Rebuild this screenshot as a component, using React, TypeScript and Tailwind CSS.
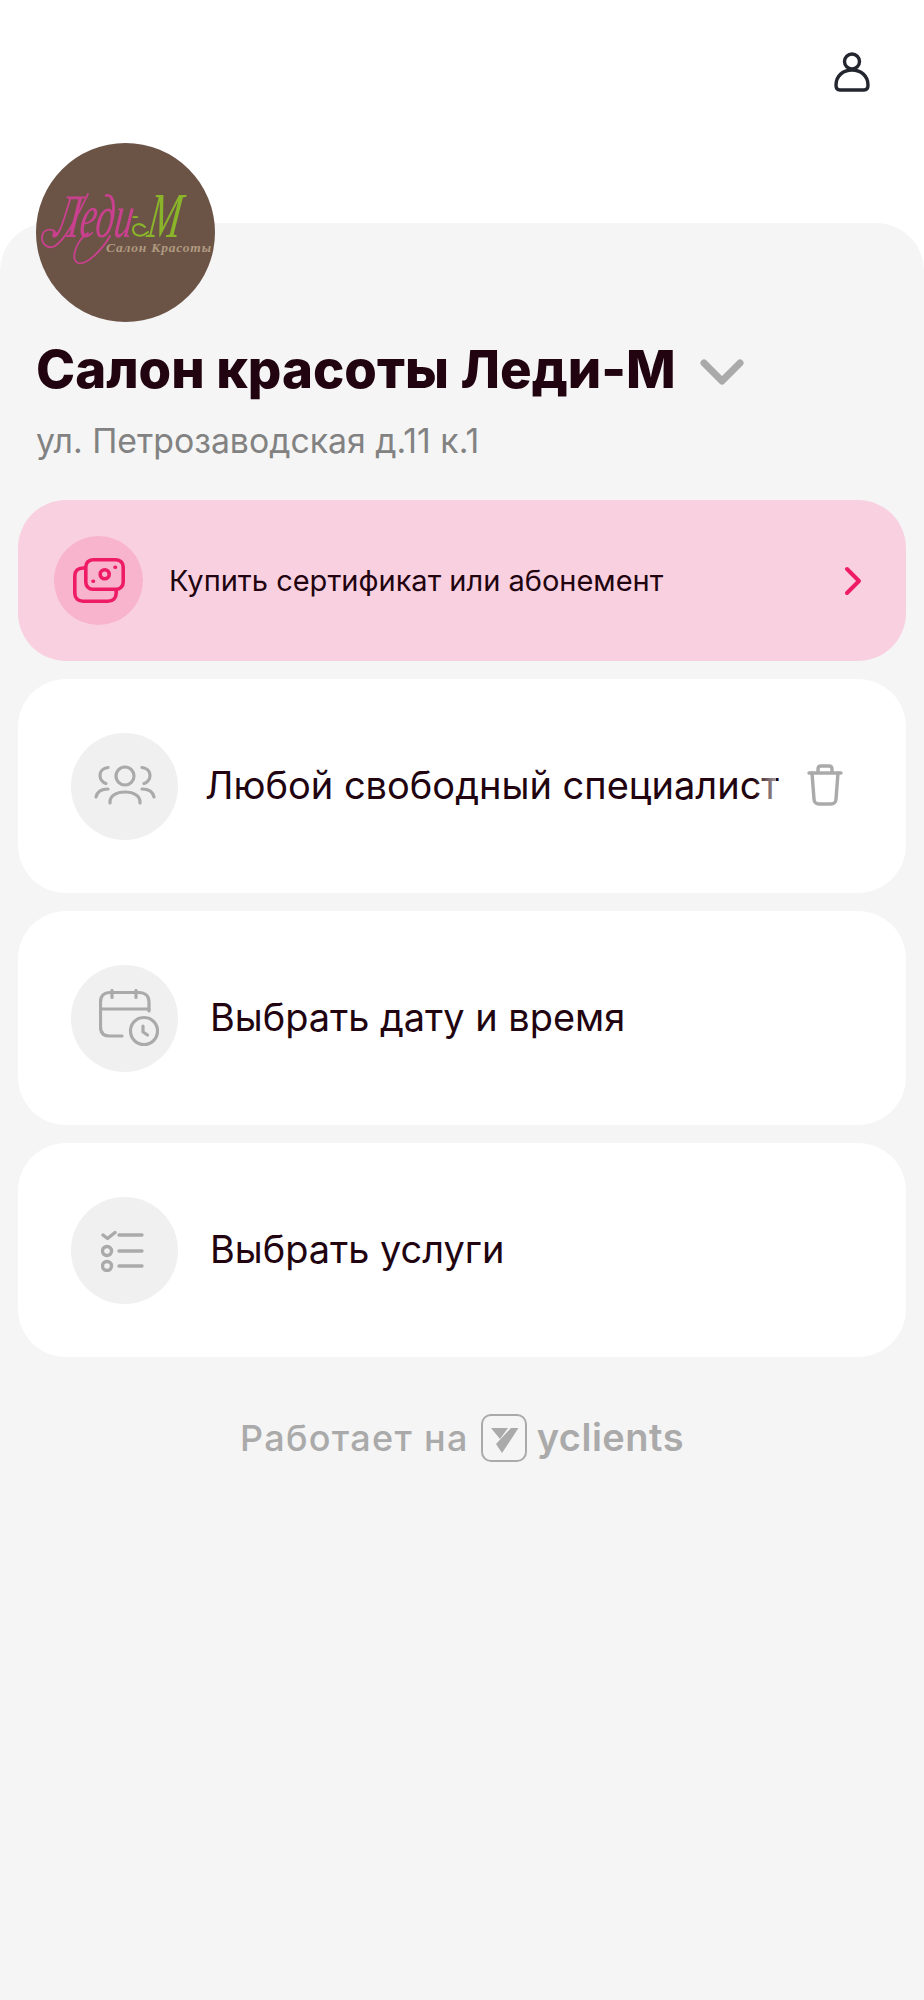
import React from "react";

const Avatar = () => (
  <div className="relative z-10 w-[179px] h-[179px] rounded-full bg-[#6b5446] overflow-hidden">
    <svg viewBox="0 0 179 179" className="w-full h-full" fill="none">
      {/* swashes of the script logo */}
      <path d="M21 91c-6-8-15-4-15 4 0 8 8 11 13 8 12-8 22-30 33-52" stroke="#c9408f" strokeWidth="1.800" strokeLinecap="round" />
      <path d="M74 93c-8 14-24 30-32 27-8-4-2-22 10-30" stroke="#c9408f" strokeWidth="1.800" strokeLinecap="round" />
      <path d="M109 84c-5-5-12-3-12 3 1 6 8 8 15 2" stroke="#8ab52a" strokeWidth="2" strokeLinecap="round" />
      <text transform="translate(17 94) skewX(-8) scale(.6 1)" fontFamily="'Liberation Serif', serif" fontStyle="italic" fontSize="62" fill="#c9408f">Леди</text>
      <text x="96" y="79" fontFamily="'Liberation Serif', serif" fontStyle="italic" fontWeight="700" fontSize="20" fill="#8ab52a">-</text>
      <text transform="translate(110 94) skewX(-8) scale(.62 1)" fontFamily="'Liberation Serif', serif" fontStyle="italic" fontSize="64" fill="#8ab52a">М</text>
      <text x="70" y="109" fontFamily="'Liberation Serif', serif" fontStyle="italic" fontWeight="700" fontSize="13.5" fill="#b09a80" textLength="105">Салон Красоты</text>
    </svg>
  </div>
);

const PeopleIcon = () => (
  <svg viewBox="0 0 62 42" className="w-[62px] h-[42px]" fill="none" stroke="#aaa" strokeWidth="3.200" strokeLinecap="round">
    <circle cx="31" cy="11" r="9" />
    <path d="M16 38v-1c0-6 6-10 15-10s15 4 15 10v1" />
    <path d="M14 2.500c-5 .5-8 4-8 8s3 7 6 8" />
    <path d="M48 2.500c5 .5 8 4 8 8s-3 7-6 8" />
    <path d="M2 32c1-5 5-8 12-8" />
    <path d="M60 32c-1-5-5-8-12-8" />
  </svg>
);

const CalendarIcon = () => (
  <svg viewBox="0 0 60 58" className="w-[60px] h-[58px] ml-[9px]" fill="none" stroke="#aaa" strokeWidth="3.200" strokeLinecap="round" strokeLinejoin="round">
    <path d="M23 47H11c-6 0-9.500-3-9.500-9V13c0-6 3.500-9.500 9.500-9.500h29c6 0 10 3.500 10 9.500v9" />
    <path d="M2 20h48" />
    <path d="M13 1.500v7M37 1.500v7" />
    <circle cx="45" cy="42" r="13.500" />
    <path d="M44 37v6l4.500 3" />
  </svg>
);

const ListIcon = () => (
  <svg viewBox="0 0 43 43" className="w-[43px] h-[43px] mr-[5px]" fill="none" stroke="#aaa" strokeWidth="3.400" strokeLinecap="round" strokeLinejoin="round">
    <path d="M2 6l4.500 3.500L14 3.500" />
    <circle cx="6" cy="22" r="4.500" />
    <circle cx="6" cy="37" r="4.500" />
    <path d="M18 6h23M18 22h23M18 37h23" />
  </svg>
);

const Row = ({ icon, children }: { icon: React.ReactNode; children: React.ReactNode }) => (
  <div className="h-[214px] rounded-[48px] bg-white flex items-center pl-[53px] pr-[56px]">
    <div className="w-[107px] h-[107px] rounded-full bg-[#f0f0f0] flex items-center justify-center shrink-0">
      {icon}
    </div>
    {children}
  </div>
);

export default function App() {
  return (
    <div className="w-[924px] min-h-[2000px] bg-white font-['Inter',sans-serif] text-[#21040f]">
      <div className="h-[223px] flex justify-end pt-[52px] pr-[54px]">
        <svg viewBox="0 0 36 40" className="w-[36px] h-[40px]" fill="none" stroke="#23262f" strokeWidth="3.400">
          <circle cx="18" cy="9.500" r="7.500" />
          <path d="M2 33c0-9 7-15 16-15s16 6 16 15c0 3-1.500 5-4 5H6c-2.500 0-4-2-4-5z" />
        </svg>
      </div>

      <div className="bg-[#f5f5f5] rounded-t-[48px] h-[1777px] px-[18px] flow-root">
        <div className="px-[18px] -mt-[80px]">
          <Avatar />
          <div className="flex items-center mt-[10px] h-[75px]">
            <h1 className="text-[52.7px] leading-[75px] font-extrabold whitespace-nowrap">Салон красоты Леди-М</h1>
            <svg viewBox="0 0 44 26" className="w-[44px] h-[26px] ml-[24px] mt-[4px]" fill="none" stroke="#aaa" strokeWidth="7" strokeLinecap="round" strokeLinejoin="round">
              <path d="M4 4l18 18L40 4" />
            </svg>
          </div>
          <p className="text-[33.8px] leading-[44px] text-[#828282] mt-[12px]">ул. Петрозаводская д.11 к.1</p>
        </div>

        <div className="mt-[37px] flex flex-col gap-[18px]">
          <div className="h-[161px] rounded-[48px] bg-[#f9d0df] flex items-center pl-[36px] pr-[44px]">
            <div className="w-[89px] h-[89px] rounded-full bg-[#f8b4cc] flex items-center justify-center shrink-0">
              <svg viewBox="0 0 52 45" className="w-[52px] h-[45px]" fill="none" stroke="#ee1c64" strokeWidth="3.600" strokeLinecap="round" strokeLinejoin="round">
                <rect x="12.800" y="1.800" width="37.400" height="29.400" rx="7" />
                <path d="M12 10h-2c-5 0-8.200 3-8.200 8v17c0 5 3.200 8.200 8.200 8.200h25c5 0 8.200-3.200 8.200-8.200v-3" />
                <circle cx="31.700" cy="16.300" r="4.500" />
                <path d="M20 23.300h.5M42 9.300h.5" />
              </svg>
            </div>
            <span className="text-[29px] ml-[26px] flex-1">Купить сертификат или абонемент</span>
            <svg viewBox="0 0 18 30" className="w-[18px] h-[30px]" fill="none" stroke="#ee1c64" strokeWidth="4" strokeLinecap="round" strokeLinejoin="round">
              <path d="M3 3l12 12L3 27" />
            </svg>
          </div>

          <Row icon={<PeopleIcon />}>
            <span className="relative text-[38px] ml-[27px] pb-[2px] w-[571px] whitespace-nowrap">
              Любой свободный специалист
              <span className="absolute right-0 top-0 h-full w-[22px] bg-gradient-to-r from-white/0 to-white/60" />
            </span>
            <svg viewBox="0 0 36 42" className="w-[36px] h-[42px] ml-[31px] mb-[2px] shrink-0" fill="none" stroke="#aaa" strokeWidth="3.400" strokeLinecap="round" strokeLinejoin="round">
              <path d="M2 9h32M11 9V5c0-2 1-3 3-3h8c2 0 3 1 3 3v4" />
              <path d="M5 9l2 26c0 3 2 5 5 5h12c3 0 5-2 5-5l2-26" />
            </svg>
          </Row>
          <Row icon={<CalendarIcon />}>
            <span className="text-[37.9px] ml-[32px] pb-[2px]">Выбрать дату и время</span>
          </Row>
          <Row icon={<ListIcon />}>
            <span className="text-[37.9px] ml-[32px] pb-[2px]">Выбрать услуги</span>
          </Row>
        </div>

        <div className="mt-[52px] flex items-center justify-center text-[#aaa]">
          <span className="text-[36px] font-medium tracking-[1.3px]">Работает на</span>
          <div className="ml-[12px] w-[46px] h-[48px] rounded-[10px] border-2 border-[#aaa] flex items-center justify-center">
            <svg viewBox="0 0 30 32" className="w-[30px] h-[32px]">
              <path d="M2 6h17l-8 11zM22 6h7.500L13 31l-6-9z" fill="#aaa" />
            </svg>
          </div>
          <span className="ml-[10px] text-[38px] font-semibold tracking-[0.5px]">yclients</span>
        </div>
      </div>
    </div>
  );
}
